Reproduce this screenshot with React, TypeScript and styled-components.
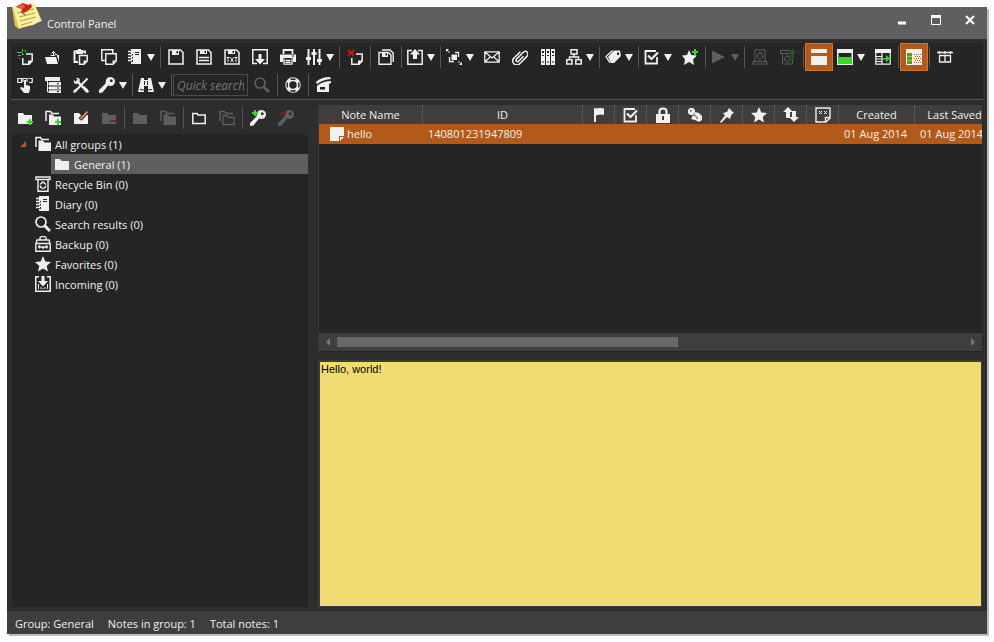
import React from "react";
import styled, { createGlobalStyle, css } from "styled-components";

const color = {
  frame: "#2d2d2d",
  panel: "#252525",
  title: "#5f5f5f",
  header: "#3e3e3e",
  line: "#555555",
  text: "#f0f0f0",
  disabled: "#5e5e5e",
  accent: "#b35a1a",
  accentEdge: "#cf7433",
  green: "#35d92b",
  note: "#f1dc74",
};

const GlobalStyle = createGlobalStyle`
  *, *::before, *::after { box-sizing: border-box; }
  body {
    margin: 0;
    background: #fefefe;
    color: ${color.text};
    font: 11px/20px "Open Sans", "Noto Sans", sans-serif;
  }
  button, input, textarea { font: inherit; color: inherit; }
`;

/* ---------- icons ---------- */

const G = color.green;
const plus = (x: number, y: number) => (
  <path fill={G} d={`M${x + 2} ${y}h2v2h2v2h-2v2h-2v-2h-2v-2h2z`} />
);
const line = (d: string, w = 1, extra: object = {}) => (
  <path d={d} fill="none" stroke="currentColor" strokeWidth={w} {...extra} />
);
const solid = (d: string, extra: object = {}) => <path d={d} {...extra} />;
const keyShape = solid(
  "M7 3Q8 0 11.500 0Q16 .5 16 4.500Q15.500 9 11 9L9 8.500L3.500 15.500L0 16V13L6.500 6.500ZM11 2.500V5H13.500V2.500Z",
  { fillRule: "evenodd" },
);
const diary = (
  <>
    {solid("M4 0H14V15H4V13H6V11H4V9.500H6V8H4V6.500H6V5H4ZM8 3V4H12V3ZM8 5V6H12V5Z", { fillRule: "evenodd" })}
    {line("M1 2.500H5M1 5.500H5M1 8.500H5M1 11.500H5", 1.5)}
  </>
);
const floppy = line("M1 1H12.500L15 3.500V15H1Z", 1.5);
const folder = solid("M1 3H6L7.500 5H15V14H1Z");
const star = solid("M8 0L10.300 5.500L16 6L11.700 9.900L13 15.500L8 12.500L3 15.500L4.300 9.900L0 6L5.700 5.500Z");
const backFolders = line("M1 11V1.500H5.500L7 3.500H14", 1.5);
const bin = (
  <>
    {line("M1 1H15V3.500H1ZM3 4V15.200H13V4", 1.4)}
    {line("M8 6L10.500 8V11L8 13L5.500 11V8Z", 1.5, { strokeDasharray: "4 1" })}
  </>
);
const check = (
  <>
    {line("M12 2H1.500V14.500H13V8", 1.8)}
    {line("M4 6.500L7.500 10L14 3.500", 2.2)}
  </>
);

const icons: Record<string, React.ReactNode> = {
  newNote: (
    <>
      {line("M9 5H15.200V12L12 15.200H5.800V9", 1.5)}
      {solid("M11 15.500V11.500H15.500Z")}
      <path fill={G} d="M0 3h3v1h-3zM5 0h1v3h-1zM8 1h1v2h-1zM3 3h2v1h1v1h-1v-1h-2zM1 6h3v1h-3zM2 9h1v1h-1zM5 5h2v1h-2z" />
    </>
  ),
  open: (
    <>
      {solid("M2 15L0 8H11L13 15ZM2 6H5L6 7H10V5H12V7L14 13V6H12")}
      {line("M8.500 6V2.500M6.500 4.500L8.500 2.500L10.500 4.500", 1)}
    </>
  ),
  paste: (
    <>
      {line("M5 13H1.500V2.500H12V4.500", 2)}
      {solid("M3 1H5V0H8V1H10V5H3Z")}
      {line("M6.500 6.500H14.200V12L11 15.200H6.500Z", 1.5)}
      {solid("M10.500 15V11.500H14Z")}
    </>
  ),
  copy: (
    <>
      {line("M4.500 11.500H.8V.8H11.800V4", 1.5)}
      {line("M4.800 4.800H15.200V12L12 15.200H4.800Z", 1.5)}
      {solid("M11.500 15V11.500H15Z")}
    </>
  ),
  diary,
  save: (
    <>
      {floppy}
      {solid("M4 1H11V6H4ZM8.500 2V4.500H10V2Z", { fillRule: "evenodd" })}
    </>
  ),
  saveLines: (
    <>
      {floppy}
      {solid("M4 1H11V5H4ZM8.500 2V4H10V2Z", { fillRule: "evenodd" })}
      {line("M3 8.500H13M3 11.500H13", 1.3)}
    </>
  ),
  saveText: (
    <>
      {floppy}
      {solid("M4 1H11V5H4ZM8.500 2V4H10V2Z", { fillRule: "evenodd" })}
      {line("M2.500 8.500H5.500M4 8.500V13M6.500 8.500L9.500 13M9.500 8.500L6.500 13M10.500 8.500H13.500M12 8.500V13", 1)}
    </>
  ),
  exportBox: (
    <>
      {line("M5 14.500H.8V.8H15.200V14.500H11", 1.5)}
      {solid("M6.500 5H9.500V10H13L8 15.500L3 10H6.500Z")}
    </>
  ),
  print: (
    <>
      {line("M3.500 5V1H12.500V5", 1.8)}
      {solid("M0 5.500H16V13H13V9H3V13H0ZM12 6.500V7.500H14V6.500Z", { fillRule: "evenodd" })}
      {line("M4 9.500V15.200H12V9.500M5.500 11.500H10.500M5.500 13.300H10.500", 1.3)}
    </>
  ),
  sliders: (
    <>
      {line("M2.500 0V16M8 0V16M13.500 0V16", 2)}
      {line("M0 9.500H5M5.500 4.500H10.500M11 11.500H16", 3)}
    </>
  ),
  deleteNote: (
    <>
      {line("M9 5H15.200V12L12 15.200H4.800V9", 1.5)}
      {solid("M11 15.500V11.500H15.500Z")}
      <path d="M1 1L7 7M7 1L1 7" stroke="#d80e0e" strokeWidth="2" fill="none" />
    </>
  ),
  saveAll: (
    <>
      {line("M4 1H12L15.200 4V13M1 3.500H10.500L13 6V15.200H1Z", 1.4)}
      {solid("M4 3H10V8H4ZM7.500 4V6.500H9V4Z", { fillRule: "evenodd" })}
    </>
  ),
  share: (
    <>
      {line("M5 1.500H.8V15.200H15.200V1.500H11", 1.5)}
      {solid("M8 0L13 5.500H10V10H6V5.500H3Z")}
    </>
  ),
  expand: (
    <>
      {solid("M5.500 5.500H11V11H5.500Z")}
      {line("M9 3.500H12.500V8M3.500 8V12.500H8", 1.3)}
      {line("M3.500 3.500L1 1M12.500 12.500L15 15", 1.2, { strokeDasharray: "1.500 1" })}
      {solid("M0 0H3L0 3ZM16 16H13L16 13Z")}
    </>
  ),
  mail: line("M.8 2.800H15.200V13.200H.8ZM1 3L8 9L15 3M1 13L6 8M15 13L10 8", 1.3),
  clip: (
    <g transform="rotate(45 8 8)">
      {line("M10 5V12Q10 13.500 8.500 13.500T7 12V3Q7 -.5 9.500 -.5T12.500 3V13Q12.500 17 8.500 17T4.500 13V4", 1.5)}
    </g>
  ),
  columns: solid(
    "M1 0H5V16H1ZM6 0H10V16H6ZM11 0H15V16H11ZM2 2V4H4V2ZM7 2V4H9V2ZM12 2V4H14V2ZM2 6V7H4V6ZM7 6V7H9V6ZM12 6V7H14V6ZM2.500 12V14H3.500V12ZM7.500 12V14H8.500V12ZM12.500 12V14H13.500V12Z",
    { fillRule: "evenodd" },
  ),
  network: line("M5 .8H11V5H5ZM.8 10.800H6V15H.8ZM9.800 10.800H15.200V15H9.800ZM8 5V8M3.500 11V8H12.500V11", 1.5),
  tag: (
    <>
      {line("M7.500 1.500L1 7.500L5 14", 1.3)}
      {solid("M9 1.500H15L16 7L9 14H6L3 8ZM12 3.500V6H14V3.500Z", { fillRule: "evenodd" })}
    </>
  ),
  check,
  starPlus: (
    <>
      {solid("M7 1L9.300 6L15 6.500L11 10.500L12 16L7 13L2 16L3 10.500L0 6.500L5 6Z")}
      {plus(10, 0)}
    </>
  ),
  play: solid("M1 1.500L14 8L1 14.500Z"),
  recycle: (
    <>
      {line("M3 12V1H13V12M1 12.500H15V15H1Z", 1)}
      {line("M8 3.500L10.500 5.500V8.500L8 10L5.500 8.500V5.500Z", 1.3, { strokeDasharray: "3 1" })}
    </>
  ),
  restore: (
    <>
      {line("M10 1.500H.5V4.500H10M2.500 5V15H12.500V10", 1)}
      {line("M7.500 6.500L10 8.500V11.500L7.500 13L5 11.500V8.500Z", 1.3, { strokeDasharray: "3 1" })}
      <path fill="#24591f" d="M12.500 0L16 4H14V9H11V4H9Z" />
    </>
  ),
  layout: solid("M0 0H16V4H0ZM0 7H16V16H0Z"),
  preview: (
    <>
      {line("M.8 .8H15.200V15.200H.8Z", 1.5)}
      {solid("M0 0H16V4H0Z")}
      <path fill={G} d="M1 8H15V15H1Z" />
    </>
  ),
  dock: (
    <>
      {line("M.8 .8H15.200V15.200H.8ZM7 4V15M1 7.500H7M1 10H7M1 12.500H7", 1.2)}
      {solid("M0 0H16V4H0Z")}
      <path fill={G} d="M8 9H11V6L15 9.500L11 13V10.500H8Z" />
    </>
  ),
  calendar: (
    <>
      {solid("M0 0H16V16H0Z")}
      <path fill="#5d9a22" d="M1 4H6V15H1Z" />
      <path fill="#fff" d="M1 7h5v1h-5zM1 11h5v1h-5z" opacity=".4" />
      <path
        fill="none"
        stroke={color.accent}
        strokeWidth="1"
        strokeDasharray="1 1"
        d="M8 5.500H15M9 7.500H15M8 9.500H15M9 11.500H15M8 13.500H15"
      />
    </>
  ),
  grid: line("M0 3.500H16M2.500 2V5M8 2V5M13.500 2V5M2.500 6.500H13.500V13H2.500ZM8 6V13", 1.3),
  hand: (
    <>
      {line("M.8 1.500H4.500V5.500H.8ZM6 5V1.500H10V5M11.500 1.500H15.200V5.500H12", 1.2)}
      {solid("M7 3H9V8L13 9V12L12 16H7L3 11L4 10L7 11Z")}
    </>
  ),
  list: (
    <>
      {solid("M0 0H15V4H0ZM4 5H16V8.500H4ZM4 9.500H16V12.500H4ZM4 13.300H16V16H4Z")}
      <path stroke={color.panel} d="M12 6.800H14M12 11H14M12 14.500H14" />
      {line("M2.500 4V15H4M2.500 7H4M2.500 11H4")}
    </>
  ),
  tools: (
    <>
      {line("M3.500 3.500L14 14.500", 2.5)}
      {line("M14.500 1.500L2 14.500", 2)}
      {solid("M1 3L3.500 5.500L5.500 3.500L3 1Q6 0 7 3L6 6L3 7Q0 6 1 3ZM11 9L15 12.500L16 15L14 16L11 13ZM1 13L4 11L5 12L3 15L1 16L0 15Z")}
    </>
  ),
  key: keyShape,
  binoculars: (
    <>
      {solid("M3 1H6V3H10V1H13L16 15H10V9H6V15H0Z")}
      <path stroke={color.panel} strokeWidth="1" fill="none" d="M6.500 4V8M9.500 4V8M2 12.500L6 13M14 12.500L10 13" />
    </>
  ),
  search: (
    <>
      <circle cx="6" cy="6" r="5" fill="none" stroke="currentColor" strokeWidth="1.700" />
      {line("M9.500 9.500L15 15", 3)}
    </>
  ),
  help: (
    <>
      <circle cx="8" cy="8" r="5.700" fill="none" stroke="currentColor" strokeWidth="4" />
      <path
        stroke={color.panel}
        strokeWidth="1.500"
        fill="none"
        d="M5.500 2.500Q8 1.500 10.500 2.500M5.500 13.500Q8 14.500 10.500 13.500M2.500 5.500Q1.500 8 2.500 10.500M13.500 5.500Q14.500 8 13.500 10.500"
      />
    </>
  ),
  clapper: (
    <>
      {solid("M0 5Q5 0 14 0L15 2Q7 2.500 1 7ZM2 8Q8 4 15 4V6L13 7V15H1V9ZM4 10V12.500H9V10Z", { fillRule: "evenodd" })}
    </>
  ),
  folderAdd: (
    <>
      {folder}
      {plus(10, 9)}
    </>
  ),
  foldersAdd: (
    <>
      {backFolders}
      {solid("M4 4.500H8L9 6.500H16V15H4Z")}
      {plus(10, 9)}
    </>
  ),
  folderEdit: (
    <>
      {folder}
      <path d="M14.500 1.500L7 9.500" stroke="#252525" strokeWidth="4" />
      <path d="M14.500 1.500L7.500 9" stroke="#d98648" strokeWidth="2" />
    </>
  ),
  folderRemove: (
    <>
      {folder}
      <path fill="#8a2020" d="M9 10H15V12H9Z" />
    </>
  ),
  folder,
  folders: (
    <>
      {backFolders}
      {solid("M3.500 4.500H8L9.500 6.500H16V15H3.500Z")}
    </>
  ),
  folderOpen: line("M1.800 3.500H6L7 5H14.200V13.500H1.800Z", 1.5),
  foldersOpen: (
    <>
      {backFolders}
      {line("M4 5.500H8L9 7.500H15.200V14.500H4Z", 1.3)}
    </>
  ),
  keyAdd: (
    <>
      {keyShape}
      {plus(2, 0)}
    </>
  ),
  keyRemove: (
    <>
      {keyShape}
      <path fill="#7c1c1c" d="M2 2H8V4H2Z" />
    </>
  ),
  bin,
  backup: (
    <>
      {line("M5 4V1.500L6.500 .5H9.500L11 1.500V4M2 4H14L15.200 8V15.200H.8V8ZM1 7.500H15", 1.4)}
      {line("M3 11H13M4.500 9V12.500M11.500 9V12.500M7 12H9", 1.3)}
    </>
  ),
  star,
  incoming: (
    <>
      {line("M4 .8H.8V15.200H15.200V.8H12", 1.5)}
      {solid("M6.500 0H9.500V5H13L8 10.500L3 5H6.500Z")}
      {line("M3.500 8V13M6 11V13M8 12V13M10 11V13M12.500 8V13", 1)}
    </>
  ),
  flag: solid("M3 1L5 1.500L9 1L13 1.500V8L9 7.500L5 8.500V15H3Z"),
  lock: (
    <>
      {line("M4.500 8V4.500Q4.500 1.500 8 1.500T11.500 4.500V8", 2.2)}
      {solid("M1 7H15V16H1ZM7 9V13H9V9Z", { fillRule: "evenodd" })}
    </>
  ),
  chat: (
    <>
      {solid("M1 3L3 1H6L8 3V6L6 8H3L1 6ZM3 3V4.500H4.500V3ZM6 8L8 5L12 6L15 9V13L12 15L8 13L4 12L5 10Z", { fillRule: "evenodd" })}
      <path stroke={color.header} fill="none" d="M6 7.500L9.500 9.500M9 11H11" />
    </>
  ),
  pin: solid("M10 1L15 6L13 7L12 9L11 12L8 10L2 16L1 15L6 8.500L4 6L8 5L9 3Z"),
  swap: solid("M5 0L10 5H7V11H3V5H0ZM9 4H13V10H16L11 15L6 10H9Z"),
  scramble: (
    <>
      {line("M1 1H15V11L11 15H1ZM10.500 15V10.500H15", 1.4)}
      {line("M4 4L7 7M7 4L4 7M9 4L12 7M12 4L9 7")}
    </>
  ),
  note: (
    <>
      {solid("M1 1H15V10H10V15H1Z")}
      {solid("M11 11H15L11 15Z")}
    </>
  ),
};

const Svg = styled.svg`
  display: block;
  flex: none;
  width: 16px;
  height: 16px;
  fill: currentColor;
`;
const Icon = ({ name, label }: { name: string; label?: string }) => (
  <Svg viewBox="0 0 16 16" role={label ? "img" : undefined} aria-label={label} aria-hidden={label ? undefined : true}>
    {icons[name]}
  </Svg>
);

/* ---------- window frame ---------- */

const Page = styled.div`
  display: flex;
  min-height: 100vh;
  padding: 7px 7px 8px;
`;
const Window = styled.main`
  position: relative;
  display: flex;
  flex: 1;
  flex-direction: column;
  min-width: 0;
  background: ${color.frame};
  box-shadow: 2px 2px 0 #bcbcbc;
`;
const TitleBar = styled.header`
  display: flex;
  align-items: center;
  height: 32px;
  padding-left: 40px;
  background: ${color.title};
`;
const Logo = styled.svg`
  position: absolute;
  top: -5px;
  left: 4px;
  width: 32px;
  height: 30px;
`;
const Title = styled.h1`
  flex: 1;
  margin: 0;
  padding-top: 2px;
  font-size: 11px;
  font-weight: 400;
`;
const WindowButton = styled.button`
  display: grid;
  place-items: center;
  width: 34px;
  height: 26px;
  margin-bottom: 6px;
  padding: 0;
  border: 0;
  background: none;
`;
const Glyph = styled.svg`
  width: 10px;
  height: 10px;
  fill: none;
  stroke: #fff;
`;

/* ---------- toolbars ---------- */

const Tools = styled.section`
  margin: 4px 4px 0;
  border-bottom: 1px solid ${color.line};
  background: ${color.panel};
`;
const ToolRow = styled.div`
  display: flex;
  align-items: center;
  height: 28px;
`;
const Divider = styled.span`
  flex: none;
  width: 1px;
  height: 22px;
  margin: 0 1px;
  background: ${color.line};
`;
const ToolButton = styled.button<{ $menu?: boolean; $active?: boolean }>`
  display: flex;
  flex: none;
  align-items: center;
  justify-content: center;
  gap: 4px;
  width: ${(p) => (p.$menu ? 36 : 28)}px;
  height: 28px;
  padding: 0;
  border: 1px solid transparent;
  background: none;
  &:disabled { color: ${color.disabled}; }
  ${(p) =>
    p.$active &&
    css`
      border-color: ${color.accentEdge};
      background: ${color.accent};
    `}
`;
const Arrow = styled.span`
  border: 4px solid transparent;
  border-top: 7px solid currentColor;
  border-bottom: 0;
`;
const QuickSearch = styled.input`
  width: 75px;
  height: 22px;
  padding: 0 3px;
  border: 1px solid #4a4a4a;
  background: ${color.panel};
  font-size: 12px;
  font-style: italic;
  &::placeholder { color: #777; opacity: 1; }
`;

type Tool = { icon: string; label: string; menu?: boolean; active?: boolean; off?: boolean } | "|";
const t = (icon: string, label: string, o: object = {}): Tool => ({ icon, label, ...o });
const menu = { menu: true };
const off = { off: true };

const mainTools: Tool[] = [
  t("newNote", "New note"), t("open", "Load note"), t("paste", "New note from clipboard"), t("copy", "Duplicate note"),
  t("diary", "Diary", menu), "|",
  t("save", "Save"), t("saveLines", "Save as"), t("saveText", "Save as text"), t("exportBox", "Restore from backup"),
  t("print", "Print"), t("sliders", "Adjust", menu), "|",
  t("deleteNote", "Delete note"), "|", t("saveAll", "Save all"), "|", t("share", "Backup", menu), "|",
  t("expand", "Dock", menu), t("mail", "Send as text"), t("clip", "Send as attachment"), t("columns", "Zip"),
  t("network", "Send via network", menu), "|", t("tag", "Tags", menu), "|",
  t("check", "Switches", menu), t("starPlus", "Add to favorites"), "|",
  t("play", "Run", { menu: true, off: true }), "|",
  t("recycle", "Empty recycle bin", off), t("restore", "Restore note", off), "|",
  t("layout", "Preview", { active: true }), t("preview", "Preview color", menu), t("dock", "Preview right"), "|",
  t("calendar", "Show groups", { active: true }), "|", t("grid", "Reset columns"),
];
const hotTools: Tool[] = [
  t("hand", "Hotkeys"), t("list", "Menus"), t("tools", "Preferences"), t("key", "Password", menu), "|",
  t("binoculars", "Search", menu), "|",
];
const helpTools: Tool[] = [t("search", "Clear search", off), "|", t("help", "Help"), "|", t("clapper", "Support")];
const groupTools: Tool[] = [
  t("folderAdd", "Add group"), t("foldersAdd", "Add subgroup"), t("folderEdit", "Edit group"), t("folderRemove", "Remove group", off), "|",
  t("folder", "Show group", off), t("folders", "Show all groups", off), "|",
  t("folderOpen", "Hide group"), t("foldersOpen", "Hide all groups", off), "|",
  t("keyAdd", "Lock group"), t("keyRemove", "Unlock group", off),
];

const ToolSet = ({ items }: { items: Tool[] }) => (
  <>
    {items.map((it, i) =>
      it === "|" ? (
        <Divider key={i} />
      ) : (
        <ToolButton
          key={i}
          type="button"
          aria-label={it.label}
          aria-haspopup={it.menu ? "menu" : undefined}
          $menu={it.menu}
          $active={it.active}
          disabled={it.off}
        >
          <Icon name={it.icon} />
          {it.menu && <Arrow />}
        </ToolButton>
      ),
    )}
  </>
);

/* ---------- body ---------- */

const Body = styled.div`
  display: grid;
  flex: 1;
  grid-template-columns: 298px minmax(0, 1fr);
  gap: 9px;
  min-height: 0;
  padding: 4px 5px 4px 4px;
`;
const Groups = styled.nav`
  display: flex;
  flex-direction: column;
`;
const Tree = styled.ul`
  flex: 1;
  margin: 2px 0 0 1px;
  padding: 0;
  border-right: 1px solid #303030;
  background: ${color.panel};
  list-style: none;
`;
const Branch = styled.li<{ $child?: boolean; $selected?: boolean }>`
  display: flex;
  align-items: center;
  gap: 4px;
  height: 20px;
  margin-left: ${(p) => (p.$child ? 39 : 0)}px;
  padding-left: ${(p) => (p.$child ? 3 : 23)}px;
  background: ${(p) => (p.$selected ? color.title : "transparent")};
  white-space: nowrap;
`;
const BranchLabel = styled.span`
  padding-top: 1px;
`;
const Expander = styled.svg`
  width: 6px;
  height: 6px;
  margin: 0 5px 0 -15px;
  fill: ${color.accent};
`;
const Notes = styled.section`
  display: flex;
  flex-direction: column;
  min-width: 0;
  padding-top: 1px;
`;
const NoteList = styled.div`
  height: 247px;
  border-left: 1px solid #383838;
  background: ${color.panel};
`;
const TableView = styled.div`
  height: 228px;
  overflow: hidden;
`;
const Table = styled.table`
  width: 1219px;
  table-layout: fixed;
  border-spacing: 0;
`;
const Head = styled.th`
  height: 19px;
  padding: 0;
  border-right: 1px solid #565656;
  background: ${color.header};
  font-weight: 400;
  line-height: 19px;
  svg { margin: 0 auto; }
`;
const Cell = styled.td`
  height: 20px;
  padding: 0 5px;
  background: ${color.accent};
  line-height: 20px;
`;
const Clip = styled.div`
  display: flex;
  gap: 2px;
  align-items: center;
  overflow: hidden;
  white-space: nowrap;
`;
const NameClip = styled(Clip)`
  padding-left: 5px;
`;
const ScrollBar = styled.div`
  display: flex;
  align-items: center;
  height: 18px;
  background: ${color.header};
`;
const ScrollButton = styled.button<{ $right?: boolean }>`
  display: grid;
  place-items: center;
  width: 18px;
  height: 18px;
  padding: 0;
  border: 0;
  background: none;
  &::before {
    content: "";
    border: 4px solid transparent;
    ${(p) => (p.$right ? "border-right: 0; border-left-color: #777;" : "border-left: 0; border-right-color: #777;")}
  }
`;
const Track = styled.div`
  flex: 1;
`;
const Thumb = styled.div`
  height: 10px;
  background: #686868;
`;
const Preview = styled.textarea`
  flex: 1;
  margin-top: 8px;
  padding: 0 1px;
  border: 2px solid #3c3c38;
  border-width: 2px 1px 1px 2px;
  outline: 0;
  background: ${color.note};
  color: #000;
  font: 11px/14px "Liberation Sans", Arial, sans-serif;
  resize: none;
`;
const StatusBar = styled.footer`
  display: flex;
  align-items: center;
  gap: 14px;
  height: 23px;
  padding: 2px 8px 0;
  background: ${color.header};
`;

const iconColumns = [
  ["flag", "Priority"], ["check", "Completed"], ["lock", "Protected"], ["chat", "Password"],
  ["pin", "Pinned"], ["star", "Favorite"], ["swap", "Sent/Received"], ["scramble", "Scrambled"],
];
const groups = [
  ["bin", "Recycle Bin (0)"], ["diary", "Diary (0)"], ["search", "Search results (0)"],
  ["backup", "Backup (0)"], ["star", "Favorites (0)"], ["incoming", "Incoming (0)"],
];
const scroll = { visible: 663, total: 1219 };

export default function App() {
  return (
    <Page>
      <GlobalStyle />
      <Window>
        <TitleBar>
          <Logo viewBox="0 0 32 30" aria-hidden>
            <path d="M1 5L23 1L31 19L8 27L4 24Z" fill="#e3c851" />
            <path d="M2 5L23 1L30 18L24 20L22 23L8 26Z" fill="#fbf0a0" />
            <path d="M22 23L24 19L31 18Z" fill="#fffbe0" />
            <path d="M6 11L23 7M8 15L24 11M9 19L25 15M10 23L21 20" stroke="#b9a04a" strokeWidth="1" />
            <path d="M11 10L14 13" stroke="#777" strokeWidth="1.500" />
            <path d="M5 5Q9 2 12 1L17 3L20 2L21 5L15 10L10 11L11 7Z" fill="#cf2412" />
            <path d="M6 5Q9 2 12 2L14 5L11 7Z" fill="#ef5a3d" />
          </Logo>
          <Title>Control Panel</Title>
          <WindowButton type="button" aria-label="Minimize">
            <Glyph viewBox="0 0 10 10"><path d="M1 8H9" strokeWidth="3" /></Glyph>
          </WindowButton>
          <WindowButton type="button" aria-label="Maximize">
            <Glyph viewBox="0 0 10 10"><path d="M.5 2V9.500H9.500V2" /><path d="M0 1.500H10" strokeWidth="3" /></Glyph>
          </WindowButton>
          <WindowButton type="button" aria-label="Close">
            <Glyph viewBox="0 0 10 10"><path d="M1 1L9 9M9 1L1 9" strokeWidth="2" /></Glyph>
          </WindowButton>
        </TitleBar>

        <Tools aria-label="Notes toolbar">
          <ToolRow><ToolSet items={mainTools} /></ToolRow>
          <ToolRow>
            <ToolSet items={hotTools} />
            <QuickSearch type="text" placeholder="Quick search" aria-label="Quick search" />
            <ToolSet items={helpTools} />
          </ToolRow>
        </Tools>

        <Body>
          <Groups aria-label="Groups">
            <ToolRow><ToolSet items={groupTools} /></ToolRow>
            <Tree>
              <Branch>
                <Expander viewBox="0 0 6 6" aria-hidden><path d="M6 0V6H0Z" /></Expander>
                <Icon name="folders" />
                <BranchLabel>All groups (1)</BranchLabel>
              </Branch>
              <Branch $child $selected>
                <Icon name="folder" />
                <BranchLabel>General (1)</BranchLabel>
              </Branch>
              {groups.map(([icon, label]) => (
                <Branch key={label}>
                  <Icon name={icon} />
                  <BranchLabel>{label}</BranchLabel>
                </Branch>
              ))}
            </Tree>
          </Groups>

          <Notes aria-label="Notes">
            <NoteList>
              <TableView>
                <Table>
                  <colgroup>
                    <col width="104" />
                    <col width="160" />
                    {iconColumns.map(([icon]) => <col key={icon} width="32" />)}
                    <col width="76" />
                    <col width="80" />
                    <col />
                  </colgroup>
                  <thead>
                    <tr>
                      <Head scope="col">Note Name</Head>
                      <Head scope="col">ID</Head>
                      {iconColumns.map(([icon, label]) => (
                        <Head key={icon} scope="col"><Icon name={icon} label={label} /></Head>
                      ))}
                      <Head scope="col">Created</Head>
                      <Head scope="col">Last Saved</Head>
                      <Head />
                    </tr>
                  </thead>
                  <tbody>
                    <tr>
                      <Cell><NameClip><Icon name="note" />hello</NameClip></Cell>
                      <Cell>140801231947809</Cell>
                      {iconColumns.map(([icon]) => <Cell key={icon} />)}
                      <Cell><Clip>01 Aug 2014</Clip></Cell>
                      <Cell><Clip>01 Aug 2014</Clip></Cell>
                      <Cell />
                    </tr>
                  </tbody>
                </Table>
              </TableView>
              <ScrollBar>
                <ScrollButton type="button" aria-label="Scroll left" />
                <Track>
                  <Thumb style={{ width: `${(scroll.visible / scroll.total) * 100}%` }} />
                </Track>
                <ScrollButton type="button" aria-label="Scroll right" $right />
              </ScrollBar>
            </NoteList>
            <Preview aria-label="Note preview" defaultValue="Hello, world!" readOnly />
          </Notes>
        </Body>

        <StatusBar>
          <span>Group: General</span>
          <span>Notes in group: 1</span>
          <span>Total notes: 1</span>
        </StatusBar>
      </Window>
    </Page>
  );
}
